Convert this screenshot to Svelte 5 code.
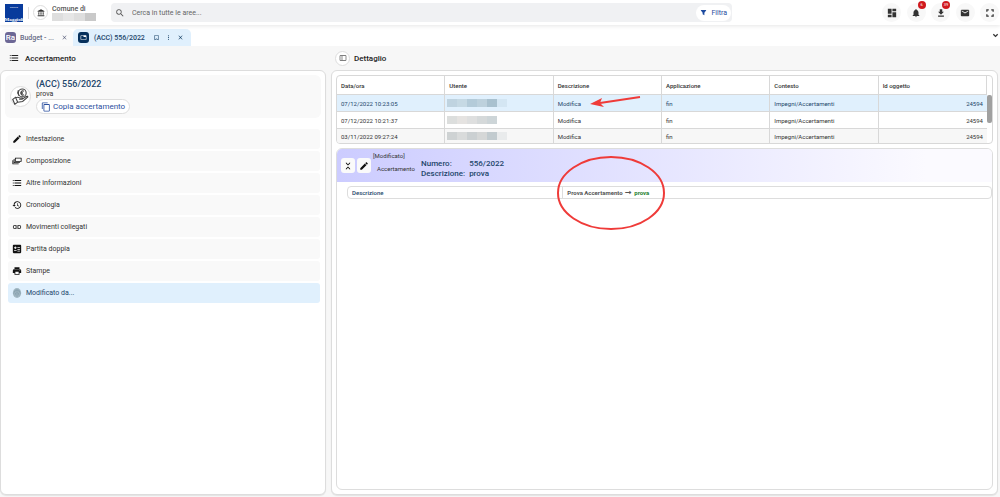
<script>
	const icons = {
		bank: "M4 10v7h3v-7H4zm6.500 0v7h3v-7h-3zM2 22h20v-3H2v3zm15-12v7h3v-7h-3zM12 1L2 6v2h20V6L12 1z",
		search: "M15.500 14h-.79l-.28-.27A6.470 6.470 0 0 0 16 9.500 6.500 6.500 0 1 0 9.500 16c1.610 0 3.090-.59 4.230-1.570l.27.28v.79l5 4.990L20.490 19l-4.990-5zm-6 0C7.010 14 5 11.990 5 9.500S7.010 5 9.500 5 14 7.010 14 9.500 11.990 14 9.500 14z",
		filter: "M3 3h18v2l-6 8v8l-6-3v-5L3 5z",
		dashboard: "M2 2h9v12H2zM2 16h9v6H2zM13 2h9v6h-9zM13 10h9v12h-9z",
		bell: "M12 22c1.100 0 2-.9 2-2h-4c0 1.100.9 2 2 2zm6-6v-5c0-3.070-1.640-5.640-4.500-6.320V4a1.500 1.500 0 0 0-3 0v.68C7.630 5.360 6 7.920 6 11v5l-2 2v1h16v-1l-2-2z",
		download: "M19 9h-4V3H9v6H5l7 7 7-7zM5 18v3h14v-3H5z",
		mail: "M20 4H4a2 2 0 0 0-2 2v12c0 1.100.9 2 2 2h16a2 2 0 0 0 2-2V6a2 2 0 0 0-2-2zm0 4l-8 5-8-5V6l8 5 8-5v2z",
		fullscreen: "M3 3h6v3H6v3H3zM15 3h6v6h-3V6h-3zM3 15h3v3h3v3H3zM18 15h3v6h-6v-3h3z",
		close: "M19 6.410L17.590 5 12 10.590 6.410 5 5 6.410 10.590 12 5 17.590 6.410 19 12 13.410 17.590 19 19 17.590 13.410 12z",
		bookmark: "M17 3H7a2 2 0 0 0-2 2v16l7-3 7 3V5a2 2 0 0 0-2-2zm0 15l-5-2.200L7 18V5h10v13z",
		more: "M12 8a2 2 0 1 0 0-4 2 2 0 0 0 0 4zm0 2a2 2 0 1 0 0 4 2 2 0 0 0 0-4zm0 6a2 2 0 1 0 0 4 2 2 0 0 0 0-4z",
		tab: "M20 4H4a2 2 0 0 0-2 2v12c0 1.100.9 2 2 2h16a2 2 0 0 0 2-2V6a2 2 0 0 0-2-2zm0 14H4V6h8v4h8v8z",
		down: "M7.410 7.500L12 12.100l4.590-4.600L19 9.900l-7 7-7-7z",
		list: "M2 5h2v2H2zM2 11h2v2H2zM2 17h2v2H2zM6 5h16v2H6zM6 11h16v2H6zM6 17h16v2H6z",
		split: "M20 4H4a2 2 0 0 0-2 2v12c0 1.100.9 2 2 2h16a2 2 0 0 0 2-2V6a2 2 0 0 0-2-2zM8 18H4V6h4v12zm12 0H10V6h10v12z",
		copy: "M16 1H4a2 2 0 0 0-2 2v14h2V3h12V1zm3 4H8a2 2 0 0 0-2 2v14c0 1.100.9 2 2 2h11a2 2 0 0 0 2-2V7a2 2 0 0 0-2-2zm0 16H8V7h11v14z",
		edit: "M3 17.250V21h3.750L17.810 9.940l-3.750-3.750L3 17.250zM20.710 7.040a1 1 0 0 0 0-1.410l-2.340-2.340a1 1 0 0 0-1.410 0l-1.830 1.830 3.750 3.750 1.830-1.830z",
		layers: "M8 4h14a1 1 0 0 1 1 1v8a1 1 0 0 1-1 1H8a1 1 0 0 1-1-1V5a1 1 0 0 1 1-1zm1 2v6h12V6zM4 7h2v8h13v2H4zM1 10h2v8h13v2H1z",
		history: "M13 3a9 9 0 0 0-9 9H1l3.890 3.890.07.14L9 12H6a7 7 0 1 1 2.060 4.940l-1.420 1.420A9 9 0 1 0 13 3zm-1 5v5l4.280 2.540.72-1.210-3.500-2.080V8H12z",
		link: "M3.900 12A3.100 3.100 0 0 1 7 8.900h4V7H7a5 5 0 0 0 0 10h4v-1.900H7A3.100 3.100 0 0 1 3.900 12zM8 13h8v-2H8v2zm9-6h-4v1.900h4a3.100 3.100 0 0 1 0 6.200h-4V17h4a5 5 0 0 0 0-10z",
		calc: "M20 2H4a2 2 0 0 0-2 2v16c0 1.100.9 2 2 2h16a2 2 0 0 0 2-2V4a2 2 0 0 0-2-2zM11 17H5v-2h6zM9 12H7v-2H5V8h2V6h2v2h2v2H9zM19 18h-6v-2h6zM19 14h-6v-2h6zM19 9h-6V7h6z",
		print: "M19 8H5a3 3 0 0 0-3 3v6h4v4h12v-4h4v-6a3 3 0 0 0-3-3zm-3 11H8v-5h8v5zm3-7a1 1 0 1 1 0-2 1 1 0 0 1 0 2zM18 3H6v4h12V3z",
		collapse: "M7 3l5 5 5-5v3l-5 5-5-5zM7 21l5-5 5 5v-3l-5-5-5 5z"
	};

	const actions = [
		{ icon: "dashboard", label: "Cruscotto" },
		{ icon: "bell", label: "Notifiche", badge: "6" },
		{ icon: "download", label: "Download", badge: "39" },
		{ icon: "mail", label: "Messaggi" },
		{ icon: "fullscreen", label: "Schermo intero" }
	];

	const menu = [
		{ icon: "edit", label: "Intestazione" },
		{ icon: "layers", label: "Composizione" },
		{ icon: "list", label: "Altre informazioni" },
		{ icon: "history", label: "Cronologia" },
		{ icon: "link", label: "Movimenti collegati" },
		{ icon: "calc", label: "Partita doppia" },
		{ icon: "print", label: "Stampe" },
		{ icon: "finger", label: "Modificato da..." }
	];

	const columns = ["Data/ora", "Utente", "Descrizione", "Applicazione", "Contesto", "Id oggetto"];

	const rows = [
		{ date: "07/12/2022 10:23:05", mask: ["#bfd3e0", "#c6d9e4", "#b4cbd9", "#bdd1dd", "#a9c1cf", "#d4e6f3"] },
		{ date: "07/12/2022 10:21:37", mask: ["#dcdedd", "#e5e3e1", "#dedfdf", "#d5d9da", "#cdd5d8"] },
		{ date: "03/11/2022 09:27:24", mask: ["#ced2d3", "#d9dbdb", "#cbd0d2", "#d5d7d7", "#c2cbcf", "#e9ebec"] }
	];

	let selected = $state(0);
	let current = $state("Modificato da...");
</script>

{#snippet icon(name)}
	<svg class="icon" viewBox="0 0 24 24" aria-hidden="true">
		{#if name === "finger"}
			<ellipse cx="12" cy="12" rx="10" ry="12" fill="#a3b8c3" />
			<path d="M5 8q7-8 14 0M4 14q0-8 8-8t8 8M7 18q2-9 5-9t5 9M12 12v9" fill="none" stroke="#7e98a6" stroke-width="1.500" />
		{:else}
			<path d={icons[name]} fill="currentColor" />
		{/if}
	</svg>
{/snippet}

<div class="page">
	<header>
		<svg class="logo" viewBox="0 0 18 18" role="img" aria-label="Maggioli">
			<rect width="18" height="18" fill="#083b9c" />
			<text x="9" y="4" text-anchor="middle" font-size="2">GRUPPO</text>
			<text x="9" y="17" text-anchor="middle" font-size="5" font-family="Liberation Serif" font-weight="700">Maggioli</text>
		</svg>
		<span class="bar"></span>
		<span class="round bank">{@render icon("bank")}</span>
		<div class="org">
			<span>Comune di</span>
			<span class="org-mask"><i></i><i></i><i></i><i></i></span>
		</div>
		<div class="search">
			{@render icon("search")}
			<input type="search" aria-label="Cerca" placeholder="Cerca in tutte le aree..." />
			<button class="filter">{@render icon("filter")}Filtra</button>
		</div>
		<div class="actions">
			{#each actions as a}
				<button class="round" aria-label={a.label}>
					{@render icon(a.icon)}
					{#if a.badge}<span class="badge">{a.badge}</span>{/if}
				</button>
			{/each}
		</div>
	</header>

	<nav class="tabs">
		<div class="tab">
			<span class="tab-icon ra">Ra</span>
			<a href="#budget">Budget - ...</a>
			<button aria-label="Chiudi">{@render icon("close")}</button>
		</div>
		<div class="tab active">
			<span class="tab-icon">{@render icon("tab")}</span>
			<a href="#acc">(ACC) 556/2022</a>
			<div class="tab-tools">
				<button aria-label="Segnalibro">{@render icon("bookmark")}</button>
				<button aria-label="Altro">{@render icon("more")}</button>
				<button aria-label="Chiudi">{@render icon("close")}</button>
			</div>
		</div>
		<button class="expand" aria-label="Tutte le schede">{@render icon("down")}</button>
	</nav>

	<main>
		<section class="left">
			<h2>{@render icon("list")}Accertamento</h2>
			<div class="panel">
				<div class="summary">
					<span class="round hand">
						<svg viewBox="0 0 24 24" fill="none" stroke="#444" stroke-width="1.500" aria-hidden="true">
							<circle cx="14.500" cy="7" r="5.500" />
							<path d="M17 4.500q-4-2-4 2.500t4 2.500M11.500 6h4M11.500 8h4M9 3l-1 4 2 4" />
							<path d="M1 16l4-3 3 7-4 3zM5 14q3-2 6 0h3q2 1 0 2h-4M14 16l6-4q3-1 2 1l-7 6-7 1" />
						</svg>
					</span>
					<div class="summary-text">
						<h1>(ACC) 556/2022</h1>
						<span>prova</span>
						<button class="copy">{@render icon("copy")}Copia accertamento</button>
					</div>
				</div>
				<div class="menu">
					{#each menu as m}
						<button class:on={current === m.label} onclick={() => (current = m.label)}>
							{@render icon(m.icon)}{m.label}
						</button>
					{/each}
				</div>
			</div>
		</section>

		<section class="right">
			<h2><button class="round split" aria-label="Pannello">{@render icon("split")}</button>Dettaglio</h2>
			<div class="panel">
				<div class="grid">
					<table>
						<thead>
							<tr>
								{#each columns as c}<th>{c}</th>{/each}
							</tr>
						</thead>
						<tbody>
							{#each rows as r, i}
								<tr class:on={selected === i} onclick={() => (selected = i)}>
									<td>{r.date}</td>
									<td>
										<span class="mask">
											{#each r.mask as c}<i style="background: {c}"></i>{/each}
										</span>
									</td>
									<td class="note-cell">
										Modifica
										{#if i === 0}
											<svg class="arrow" viewBox="0 0 52 12" aria-hidden="true">
												<path d="M50 2L10 8" stroke="#ef3b39" stroke-width="2" />
												<path d="M0 9L12 3 10 8 14 12z" fill="#ef3b39" />
											</svg>
										{/if}
									</td>
									<td>fin</td>
									<td>Impegni/Accertamenti</td>
									<td class="num">24594</td>
								</tr>
							{/each}
						</tbody>
					</table>
					<div class="scroll"><span></span></div>
				</div>

				<article>
					<div class="change-head">
						<button class="square" aria-label="Comprimi">{@render icon("collapse")}</button>
						<button class="square" aria-label="Modifica">{@render icon("edit")}</button>
						<div class="kind">
							<span>[Modificato]</span>
							<b>Accertamento</b>
						</div>
						<dl>
							<dt>Numero:</dt>
							<dd>556/2022</dd>
							<dt>Descrizione:</dt>
							<dd>prova</dd>
						</dl>
					</div>
					<div class="change">
						<span class="field">Descrizione</span>
						<span class="value">
							Prova Accertamento <span class="to">→</span> <em>prova</em>
							<svg class="ring" viewBox="0 0 108 76" aria-hidden="true">
								<ellipse cx="54" cy="38" rx="53" ry="36" fill="none" stroke="#ef3b39" stroke-width="2" />
							</svg>
						</span>
					</div>
				</article>
			</div>
		</section>
	</main>
</div>

<style>
	:global(body) {
		margin: 0;
		background: #f7f7f7;
	}

	.page {
		display: flex;
		flex-direction: column;
		min-height: 100vh;
		font-family: Roboto, sans-serif;
		font-size: 7px;
		color: #333;
	}

	.page * {
		box-sizing: border-box;
	}

	button, input {
		font: inherit;
		color: inherit;
		border: 0;
		padding: 0;
		margin: 0;
		background: none;
	}

	a {
		color: inherit;
		text-decoration: none;
	}

	h1, h2, dl, dd {
		margin: 0;
	}

	.icon {
		width: 10px;
		height: 10px;
		flex: none;
		display: block;
	}

	.round {
		position: relative;
		display: flex;
		align-items: center;
		justify-content: center;
		width: 19px;
		height: 19px;
		border-radius: 50%;
		flex: none;
	}

	header {
		display: flex;
		align-items: center;
		height: 25px;
		padding: 0 1px 0 5px;
		background: #fff;
		box-shadow: 0 1px 4px #0000001a;
		z-index: 1;
	}

	.logo {
		width: 18px;
		height: 18px;
	}

	.logo text {
		fill: #fff;
	}

	.bar {
		width: 1px;
		height: 12px;
		margin: 0 4px 0 5px;
		background: #ddd;
	}

	.bank {
		width: 15px;
		height: 15px;
		border: 1px solid #ddd;
	}

	.bank .icon {
		width: 8px;
		height: 8px;
	}

	.org {
		display: flex;
		flex-direction: column;
		width: 58px;
		padding-left: 4px;
		line-height: 8px;
		font-weight: 500;
		color: #555;
	}

	.org-mask {
		display: flex;
		width: 44px;
		height: 8px;
	}

	.org-mask i {
		flex: 1;
		background: #dedede;
	}

	.org-mask i:nth-child(2) {
		background: #e6e6e6;
	}

	.org-mask i:nth-child(4) {
		background: #c9c9c9;
	}

	.search {
		display: flex;
		align-items: center;
		gap: 7px;
		width: 62.5%;
		height: 19px;
		margin-left: 5px;
		padding: 0 1px 0 4px;
		border-radius: 4px;
		background: #f0f1f3;
		color: #555;
	}

	.search input {
		flex: 1;
		outline: 0;
	}

	.search input::placeholder {
		color: #666;
	}

	.filter {
		display: flex;
		align-items: center;
		justify-content: center;
		gap: 4px;
		width: 35px;
		height: 16px;
		border-radius: 8px;
		background: #fff;
		color: #1d4ba0;
	}

	.filter .icon {
		width: 7px;
		height: 7px;
	}

	.actions {
		display: flex;
		justify-content: space-between;
		width: 117px;
		margin-left: auto;
	}

	.actions .round {
		background: #f8f8f8;
	}

	.badge {
		position: absolute;
		top: -2px;
		right: 0;
		width: 8px;
		height: 8px;
		border-radius: 50%;
		background: #d0191e;
		color: #fff;
		font-size: 4px;
		line-height: 8px;
		text-align: center;
	}

	.tabs {
		display: flex;
		align-items: flex-end;
		height: 21px;
		background: #fff;
	}

	.tab {
		display: flex;
		align-items: center;
		gap: 4px;
		height: 17px;
		padding: 0 5px;
		border-radius: 5px 5px 0 0;
		background: #fafafa;
		color: #666b85;
		font-weight: 500;
	}

	.tab a {
		padding-right: 3px;
	}

	.tab.active {
		gap: 5px;
		padding-right: 7px;
		background: #e0f0fd;
		color: #1d466b;
	}

	.tab .icon {
		width: 7px;
		height: 7px;
	}

	.tab-tools {
		display: flex;
		gap: 5px;
	}

	.tab-icon {
		display: flex;
		align-items: center;
		justify-content: center;
		width: 11px;
		height: 11px;
		border-radius: 3px;
		background: #06305c;
		color: #fff;
	}

	.ra {
		background: #6c6795;
		font-size: 8px;
	}

	.expand {
		align-self: center;
		margin-left: auto;
	}

	.expand .icon {
		width: 9px;
		height: 9px;
	}

	main {
		display: grid;
		grid-template-columns: 326fr 667fr;
		gap: 5px;
		flex: 1;
		padding: 0 2px 2px 0;
		background: #f7f7f7;
	}

	section {
		display: flex;
		flex-direction: column;
		min-width: 0;
	}

	h2 {
		display: flex;
		align-items: center;
		gap: 6px;
		height: 24px;
		padding-left: 9px;
		font-size: 8px;
		font-weight: 500;
		color: #222;
	}

	.right h2 {
		gap: 4px;
		padding-left: 4px;
	}

	.split {
		width: 15px;
		height: 15px;
		border: 1px solid #ddd;
		background: #fff;
		color: #555;
	}

	.split .icon {
		width: 8px;
		height: 8px;
	}

	.panel {
		display: flex;
		flex-direction: column;
		flex: 1;
		padding: 4px;
		border: 1px solid #ddd;
		border-radius: 6px;
		background: #fff;
		box-shadow: 0 1px 1px #00000014;
	}

	.summary {
		display: flex;
		align-items: center;
		gap: 5px;
		height: 43px;
		padding-left: 5px;
		border-radius: 6px;
		background: #f9f9f9;
	}

	.hand {
		width: 21px;
		height: 21px;
		border: 1px solid #ddd;
		background: #fff;
	}

	.hand svg {
		width: 17px;
		height: 17px;
	}

	.summary-text {
		display: flex;
		flex-direction: column;
		align-items: flex-start;
		line-height: 9px;
	}

	h1 {
		font-size: 9px;
		line-height: 11px;
		font-weight: 500;
		color: #1d466b;
	}

	.copy {
		display: flex;
		align-items: center;
		gap: 2px;
		height: 15px;
		padding: 0 4px;
		border: 1px solid #ddd;
		border-radius: 8px;
		background: #fff;
		color: #2c50a0;
		font-size: 8px;
	}

	.menu {
		display: flex;
		flex-direction: column;
		gap: 2px;
		margin: 11px 1px 0 3px;
	}

	.menu button {
		display: flex;
		align-items: center;
		gap: 4px;
		height: 20px;
		padding-left: 4px;
		border-radius: 3px;
		background: #f9f9f9;
	}

	.menu .icon {
		color: #111;
	}

	.menu .on {
		background: #e0f0fd;
		color: #1d466b;
	}

	.grid {
		display: flex;
		border: 1px solid #d8d8d8;
		border-radius: 4px;
		overflow: hidden;
	}

	table {
		width: 100%;
		border-collapse: separate;
		border-spacing: 0;
		table-layout: fixed;
		font-size: 6px;
	}

	th, td {
		height: 17px;
		padding: 0 4px;
		border-right: 1px solid #d8d8d8;
		border-bottom: 1px solid #d8d8d8;
		text-align: left;
	}

	thead th {
		height: 19px;
		font-weight: 500;
	}

	td:last-child {
		border-right: 0;
	}

	tr.on td {
		background: #e0f0fd;
		color: #1d466b;
	}

	tbody tr:last-child td {
		height: 14px;
		border-bottom: 0;
	}

	tbody tr:nth-child(3):not(.on) td {
		background: #f7f7f7;
	}

	.num {
		text-align: right;
	}

	.mask {
		display: flex;
		height: 8px;
		margin-left: -2px;
	}

	.mask i {
		width: 10px;
	}

	.note-cell {
		position: relative;
	}

	.arrow {
		position: absolute;
		left: 36px;
		top: 0;
		width: 52px;
		height: 12px;
		z-index: 1;
	}

	.scroll {
		flex: none;
		width: 5px;
		padding-top: 19px;
	}

	.scroll span {
		display: block;
		height: 28px;
		border-radius: 2px;
		background: #a0a0a0;
	}

	article {
		display: flex;
		flex-direction: column;
		flex: 1;
		margin-top: 4px;
		border: 1px solid #ddd;
		border-radius: 6px;
	}

	.change-head {
		display: flex;
		align-items: center;
		gap: 2px;
		height: 33px;
		padding-left: 4px;
		border-radius: 5px 5px 0 0;
		background: linear-gradient(90deg, #ccccff, #fbfaff 90%);
	}

	.square {
		display: flex;
		align-items: center;
		justify-content: center;
		width: 14px;
		height: 15px;
		border-radius: 3px;
		background: #fafafa;
		color: #111;
	}

	.kind {
		display: flex;
		flex-direction: column;
		align-self: flex-start;
		gap: 6px;
		width: 46px;
		padding-top: 3px;
		font-size: 6px;
		line-height: 7px;
	}

	.kind b {
		padding-left: 4px;
		font-weight: 400;
	}

	dl {
		display: grid;
		grid-template-columns: auto auto;
		column-gap: 4px;
		padding-top: 6px;
		font-size: 8px;
		line-height: 10px;
		font-weight: 500;
		color: #1d466b;
	}

	.change {
		display: grid;
		grid-template-columns: 1fr 2fr;
		height: 13px;
		margin: 4px 0 0 10px;
		border: 1px solid #ddd;
		border-radius: 4px;
		line-height: 11px;
		font-size: 6px;
		font-weight: 700;
	}

	.field {
		padding-left: 4px;
		color: #1d466b;
		font-weight: 500;
	}

	.value {
		position: relative;
		padding-left: 4px;
		border-left: 1px solid #ddd;
		color: #555;
	}

	.to {
		margin: 0 1px;
		font-family: "DejaVu Sans", sans-serif;
		font-size: 8px;
	}

	.value em {
		font-style: normal;
		color: #1e8030;
	}

	.ring {
		position: absolute;
		left: -6px;
		top: -32px;
		width: 108px;
		height: 76px;
	}
</style>
